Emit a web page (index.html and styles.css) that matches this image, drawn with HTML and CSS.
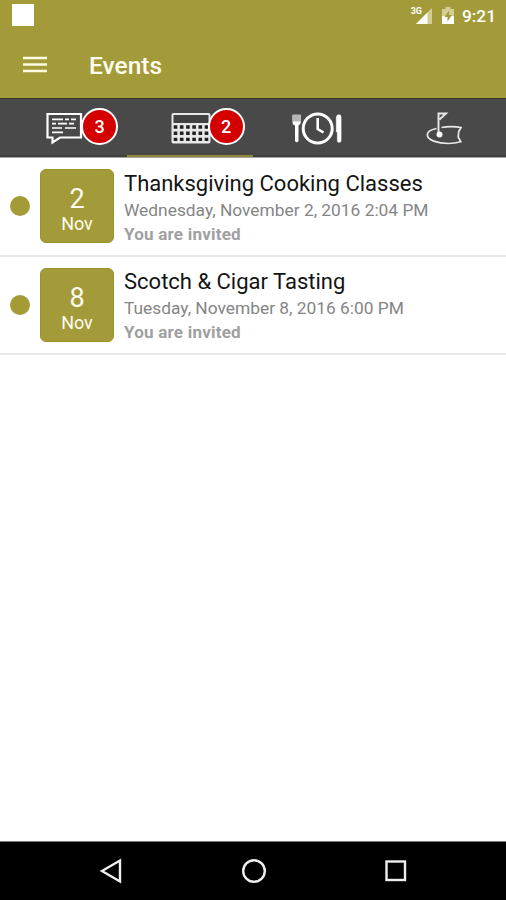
FILE: index.html
```html
<!DOCTYPE html>
<html lang="en">
<head>
<meta charset="utf-8">
<title>Events</title>
<link rel="stylesheet" href="styles.css">
</head>
<body>
<div class="screen">
  <header class="status-bar">
    <span class="notification"></span>
    <span class="network">3G</span>
    <svg class="signal" width="18" height="16" viewBox="0 0 18 16"><path d="M17 0V16H1Z" fill="#d3ce94"/><path d="M12.500 4.500V16H1Z" fill="#fff"/></svg>
    <svg class="battery" width="12" height="17" viewBox="0 0 12 17"><path d="M3.500 0h5v2H12V17H0V2h3.500Z" fill="#d3ce94"/><path d="M0 9h12v8H0Z" fill="#fff"/><path d="M7 3.500 2.500 10H5.500V14.500L10 8H7Z" fill="#a39b39"/></svg>
    <time class="clock">9:21</time>
  </header>
  <div class="app-bar">
    <svg class="menu" width="24" height="18" viewBox="0 0 24 18"><path d="M0 2H24M0 8.500H24M0 15H24" stroke="#fffbe2" stroke-width="2.600"/></svg>
    <h1 class="title">Events</h1>
  </div>
  <nav class="tabs">
    <a class="tab">
      <svg class="tab-icon" viewBox="0 98 126.500 59" fill="none" stroke="#fff"><path d="M47.500 114H81V137.500H60L52.500 142.500V137.500H47.500Z" stroke-width="2.200"/><path d="M52 119.300H63M65 119.300H69M71 119.300H76M52 123.700H56M58 123.700H67M69 123.700H74M52 128H62M65 128H76M52 132.300H63" stroke-width="1.700"/></svg>
      <span class="badge">3</span>
    </a>
    <a class="tab active">
      <svg class="tab-icon" viewBox="126.500 98 126.500 59"><rect x="171" y="113" width="39" height="30.500" rx="2" fill="#e8e8e8"/><path d="M173 115H208V123H173Z" fill="#414141"/><g stroke="#222" stroke-width="3.400" stroke-dasharray="3.600 2.600"><path d="M173.200 127H208"/><path d="M173.200 133.200H208"/><path d="M173.200 139.400H208"/></g></svg>
      <span class="badge">2</span>
    </a>
    <a class="tab">
      <svg class="tab-icon" viewBox="253 98 126.500 59" fill="none" stroke="#fff"><circle cx="317.700" cy="128.500" r="14.500" stroke-width="3"/><path d="M317.700 118V129L323.500 132.500" stroke-width="2.600"/><path d="M292.500 115H300.800V122Q300.800 125 298.500 125.500V141Q296.700 143.500 295 141V125.500Q292.500 125 292.500 122Z" fill="#fff" stroke="none"/><path d="M292.500 114.500H300.800V121.500H292.500Z" fill="#b5b5b5" stroke="none"/><path d="M336.200 117Q336.500 114.500 339 114.500Q341.200 114.500 341.200 117V140.500Q341.200 142.500 339.200 142.500Q337.200 142.500 337.200 140.500V132H336.200Z" fill="#fff" stroke="#fff" stroke-width=".3"/></svg>
    </a>
    <a class="tab">
      <svg class="tab-icon" viewBox="379.500 98 126.500 59" fill="none" stroke="#e8e8e8"><path d="M436 128.500C430 129.700 426.800 132 426.800 134.800C426.800 140 437 143.500 448 143.500C453 143.500 457 142.800 460.300 141.800L457.700 137L458.200 131.500L460.500 127.500C453 126 446 126.500 441 127.500" stroke-width="1.700"/><path d="M438 134V113.500H445.500L439 119.500" stroke-width="1.900"/><circle cx="439" cy="134.500" r="3" fill="#fff" stroke="none"/></svg>
    </a>
  </nav>
  <main class="events">
    <article class="event">
      <span class="dot"></span>
      <div class="date"><b class="day">2</b><span class="month">Nov</span></div>
      <div class="details"><h2 class="name">Thanksgiving Cooking Classes</h2><p class="when">Wednesday, November 2, 2016 2:04 PM</p><p class="invite">You are invited</p></div>
    </article>
    <article class="event">
      <span class="dot"></span>
      <div class="date"><b class="day">8</b><span class="month">Nov</span></div>
      <div class="details"><h2 class="name">Scotch &amp; Cigar Tasting</h2><p class="when">Tuesday, November 8, 2016 6:00 PM</p><p class="invite">You are invited</p></div>
    </article>
  </main>
  <footer class="nav-bar">
    <svg width="24" height="26" viewBox="0 0 24 26"><path d="M3 13 21 2.500V23.500Z"/></svg>
    <svg width="26" height="26" viewBox="0 0 26 26"><circle cx="13" cy="13" r="10.800"/></svg>
    <svg width="24" height="26" viewBox="0 0 24 26"><rect x="2.500" y="3.500" width="18.500" height="18.500"/></svg>
  </footer>
</div>
</body>
</html>
```
FILE: styles.css
```css
* { box-sizing: border-box; }
body { margin: 0; font-family: Roboto, "Liberation Sans", sans-serif; }
h1, h2, p { margin: 0; }
svg { display: block; flex: none; }
.screen { width: 506px; height: 900px; display: flex; flex-direction: column; background: #fff; overflow: hidden; }
.status-bar { height: 32px; display: flex; align-items: flex-start; padding: 4px 10px 0 12px; background: #a39b39; color: #fff; }
.notification { width: 22px; height: 22px; background: #fff; margin-right: auto; }
.network { font-size: 9px; font-weight: 700; line-height: 10px; margin: 2px -7px 0 0; }
.signal { margin: 4px 9px 0 0; }
.battery { margin: 3px 8px 0 0; }
.clock { font-size: 17.300px; font-weight: 500; line-height: 24px; }
.app-bar { height: 66px; display: flex; align-items: center; padding: 0 23px; background: #a39b39; }
.menu { margin-right: 42px; }
.title { color: #fffdf0; font-size: 24.500px; font-weight: 500; line-height: 30px; padding-top: 2px; }
.tabs { height: 60px; display: flex; background: #494949; border-top: 1px solid #383725; border-bottom: 1px solid #a5a5a5; box-shadow: inset 0 -2px #404040; }
.tab { flex: 1; position: relative; }
.tab.active { box-shadow: inset 0 -2px #8f8937; }
.tab-icon { width: 100%; height: 59px; margin-top: -1px; }
.badge { position: absolute; left: 81px; top: 9px; width: 37px; height: 37px; border: 2.500px solid #fff; border-radius: 50%; background: #d40000; color: #fff; font-size: 18px; font-weight: 500; line-height: 34px; text-align: center; }
.events { flex: 1; }
.event { height: 98.500px; display: flex; align-items: center; padding-left: 10px; border-bottom: 2px solid #e9e9e9; }
.dot { width: 20px; height: 20px; border-radius: 50%; background: #a39b35; margin-right: 10px; }
.date { width: 74px; height: 74px; border-radius: 6px; background: #a39b39; border: 1px solid #99932b; color: #fffdf0; display: flex; flex-direction: column; align-items: center; padding-top: 13px; margin-right: 10px; }
.day { font-size: 27px; font-weight: 400; line-height: 32px; }
.month { font-size: 18px; line-height: 20px; margin-top: -1px; }
.details { padding-top: 3px; }
.name { font-size: 22px; font-weight: 400; line-height: 28px; color: #141414; }
.when { font-size: 17.350px; line-height: 24px; color: #858585; }
.invite { font-size: 17px; font-weight: 700; letter-spacing: 0.220px; line-height: 24px; color: #a0a0a0; }
.nav-bar { height: 59px; border-top: 1px solid #777; background: #000; display: flex; justify-content: space-between; padding: 16px 98px 0 99px; fill: none; stroke: #eee; stroke-width: 2.400; }
```
